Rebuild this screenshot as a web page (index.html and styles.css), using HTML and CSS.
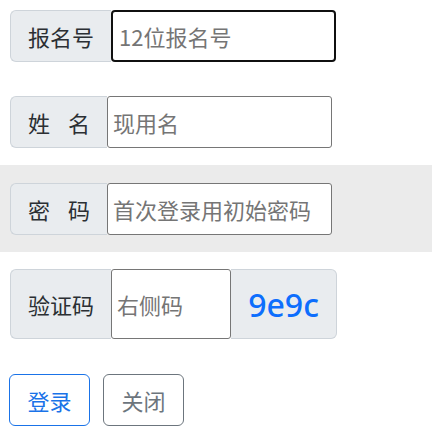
FILE: index.html
```html
<!DOCTYPE html>
<html lang="zh-CN">
<head>
<meta charset="utf-8">
<title>登录</title>
<link rel="stylesheet" href="styles.css">
</head>
<body>
<form class="form">
  <div class="row row-first">
    <div class="group">
      <span class="label">报名号</span>
      <input class="field field-focus" type="text" placeholder="12位报名号">
    </div>
  </div>
  <div class="row">
    <div class="group">
      <span class="label label-spaced">姓 名</span>
      <input class="field" type="text" placeholder="现用名">
    </div>
  </div>
  <div class="row row-hl">
    <div class="group">
      <span class="label label-spaced">密 码</span>
      <input class="field" type="password" placeholder="首次登录用初始密码">
    </div>
  </div>
  <div class="row">
    <div class="group group-tall">
      <span class="label">验证码</span>
      <input class="field field-short" type="text" placeholder="右侧码">
      <span class="code">9e9c</span>
    </div>
  </div>
  <div class="actions">
    <button type="button" class="btn btn-primary">登录</button>
    <button type="button" class="btn btn-secondary">关闭</button>
  </div>
</form>
</body>
</html>
```

FILE: styles.css
```css
html, body {
  margin: 0;
  padding: 0;
  background: #ffffff;
}

body {
  font-family: "Noto Sans CJK SC", "Noto Sans", sans-serif;
  color: #212529;
}

.form {
  margin: 0;
}

.row {
  padding: 17px 10px;
}

.row-first {
  padding-top: 10px;
}

.row-hl {
  background: #ebebeb;
  padding-top: 18px;
}

.group {
  display: flex;
  align-items: stretch;
  height: 52px;
}

.group-tall {
  height: 70px;
}

.label {
  display: flex;
  align-items: center;
  box-sizing: border-box;
  padding: 0 17px 0 17px;
  font-size: 22px;
  line-height: 1;
  color: #2b2f33;
  background: #e9ecef;
  border: 1px solid #ced4da;
  border-right: none;
  border-radius: 6px 0 0 6px;
  white-space: pre;
}

.label-spaced {
  word-spacing: 13px;
}

.field {
  box-sizing: border-box;
  width: 225px;
  height: 100%;
  margin: 0;
  padding: 0 5px;
  font-family: "Noto Sans CJK SC", "Noto Sans", sans-serif;
  font-size: 22px;
  color: #212529;
  background: #ffffff;
  border: 1px solid #767676;
  border-radius: 3px;
  outline: none;
}

.field::placeholder {
  color: #757575;
  opacity: 1;
}

.field-focus {
  border: 2px solid #101010;
  border-radius: 4px;
  padding-left: 6px;
}

.field-short {
  width: 120px;
}

.code {
  display: flex;
  align-items: center;
  justify-content: center;
  box-sizing: border-box;
  width: 106px;
  font-family: "Noto Sans", "Open Sans", sans-serif;
  font-size: 32px;
  font-weight: 500;
  color: #0d6efd;
  background: #e9ecef;
  border: 1px solid #ced4da;
  border-left: none;
  border-radius: 0 6px 6px 0;
}

.actions {
  display: flex;
  gap: 13px;
  padding: 18px 9px;
}

.btn {
  box-sizing: border-box;
  width: 81px;
  height: 52px;
  margin: 0;
  padding: 0;
  font-family: "Noto Sans CJK SC", "Noto Sans", sans-serif;
  font-size: 22px;
  background: #ffffff;
  border: 1px solid;
  border-radius: 6px;
  cursor: pointer;
}

.btn-primary {
  color: #1a73e8;
  border-color: #1a73e8;
}

.btn-secondary {
  color: #6c757d;
  border-color: #6c757d;
}
```
